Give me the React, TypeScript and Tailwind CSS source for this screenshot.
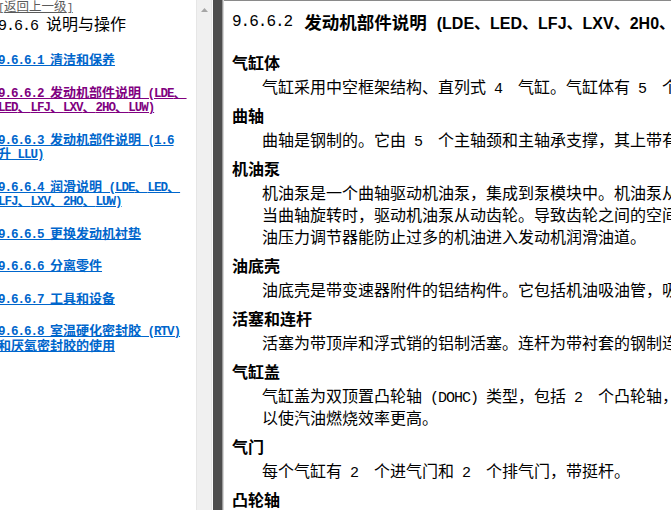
import React from 'react';

function Mixed({ text, ascii }: { text: string; ascii: string }) {
  const parts = text.split(/([\x20-\x7E]+)/);
  return (
    <>
      {parts.map((p, i) =>
        p === '' ? null : /^[\x20-\x7E]+$/.test(p) ? (
          <span key={i} className={ascii}>
            {p}
          </span>
        ) : (
          <span key={i}>{p}</span>
        )
      )}
    </>
  );
}

const LINK_ASCII = "font-['Liberation_Mono',monospace] text-[12.5px] tracking-[-1px]";
const BODY_ASCII = "font-['Liberation_Mono',monospace] text-[15px] tracking-[-1px]";

type LinkItem = { lines: string[]; visited?: boolean };

const links: LinkItem[] = [
  { lines: ['9.6.6.1 清洁和保养'] },
  { lines: ['9.6.6.2 发动机部件说明 (LDE、', 'LED、LFJ、LXV、2HO、LUW)'], visited: true },
  { lines: ['9.6.6.3 发动机部件说明 (1.6', '升 LLU)'] },
  { lines: ['9.6.6.4 润滑说明 (LDE、LED、', 'LFJ、LXV、2HO、LUW)'] },
  { lines: ['9.6.6.5 更换发动机衬垫'] },
  { lines: ['9.6.6.6 分离零件'] },
  { lines: ['9.6.6.7 工具和设备'] },
  { lines: ['9.6.6.8 室温硬化密封胶 (RTV)', '和厌氧密封胶的使用'] },
];

type Section = { title: string; body: string[] };

const sections: Section[] = [
  { title: '气缸体', body: ['气缸采用中空框架结构、直列式 4  气缸。气缸体有 5  个主轴承座'] },
  { title: '曲轴', body: ['曲轴是钢制的。它由 5  个主轴颈和主轴承支撑，其上带有'] },
  {
    title: '机油泵',
    body: [
      '机油泵是一个曲轴驱动机油泵，集成到泵模块中。机油泵从',
      '当曲轴旋转时，驱动机油泵从动齿轮。导致齿轮之间的空间',
      '油压力调节器能防止过多的机油进入发动机润滑油道。',
    ],
  },
  { title: '油底壳', body: ['油底壳是带变速器附件的铝结构件。它包括机油吸油管，吸'] },
  { title: '活塞和连杆', body: ['活塞为带顶岸和浮式销的铝制活塞。连杆为带衬套的钢制连杆'] },
  {
    title: '气缸盖',
    body: ['气缸盖为双顶置凸轮轴 (DOHC) 类型，包括 2  个凸轮轴，', '以使汽油燃烧效率更高。'],
  },
  { title: '气门', body: ['每个气缸有 2  个进气门和 2  个排气门，带挺杆。'] },
  { title: '凸轮轴', body: ['凸轮轴'] },
];

export default function App() {
  return (
    <div className="flex h-[510px] w-[671px] overflow-hidden bg-white font-['Noto_Sans_CJK_SC',sans-serif] text-black">
      {/* Left pane */}
      <div className="w-[196px] shrink-0 overflow-hidden bg-white">
        <div className="-ml-[2px] whitespace-pre">
          <div className="h-[12px] text-[12.5px] leading-[11px] text-[#5a5a5a]">
            <span className="underline underline-offset-[1px]">
              <Mixed text="[返回上一级]" ascii="font-['Liberation_Mono',monospace] text-[11px] tracking-[-0.5px]" />
            </span>
          </div>
          <div className="mt-[2px] h-[18px] text-[16px] leading-[18px] text-black">
            <Mixed text="9.6.6 说明与操作" ascii={BODY_ASCII} />
          </div>
          <div className="mt-[20px] flex flex-col gap-[18px] text-[13px] font-bold leading-[14.5px]">
            {links.map((l, i) => (
              <div key={i} className={l.visited ? 'text-[#800080]' : 'text-[#0066cc]'}>
                {l.lines.map((ln, j) => (
                  <div key={j} className="h-[14.5px]">
                    <span className="underline underline-offset-[1px]">
                      <Mixed text={ln} ascii={LINK_ASCII} />
                    </span>
                  </div>
                ))}
              </div>
            ))}
          </div>
        </div>
      </div>

      {/* Scrollbar */}
      <div className="flex w-[16px] shrink-0 flex-col items-center border-x border-[#e6e6e6] bg-[#f0f0f0]">
        <svg width="9" height="6" viewBox="0 0 9 6" className="mt-[7px]">
          <polygon points="4.5,1 8,5 1,5" fill="#a6a6a6" />
        </svg>
      </div>
      <div className="w-[1px] shrink-0 bg-[#fafafa]" />

      {/* Divider */}
      <div className="w-[9px] shrink-0 bg-[#4d4d4d]" />
      <div className="w-[1px] shrink-0 bg-[#9a9a9a]" />
      <div className="w-[1px] shrink-0 bg-[#d6d6d6]" />

      {/* Right pane */}
      <div className="min-w-0 flex-1 overflow-hidden border-t border-[#8a8a8a] bg-white pl-[8px] whitespace-pre">
        <div className="flex h-[48px] items-start pt-[9px] leading-[24px]">
          <span className="text-[16px] tracking-[-1px] font-['Liberation_Mono',monospace]">9.6.6.2</span>
          <span className="ml-[12px] text-[17.5px] font-bold">发动机部件说明</span>
          <span className="ml-[10px] text-[16px] font-bold">
            <Mixed
              text="(LDE、LED、LFJ、LXV、2H0、LUW)"
              ascii="font-['Liberation_Sans',Arial,sans-serif] text-[16px]"
            />
          </span>
        </div>
        {sections.map((s, i) => (
          <div key={i}>
            <div className="h-[26px] text-[16px] font-bold leading-[26px]">{s.title}</div>
            <div className="ml-[30px] pb-[5px] text-[16px] leading-[22px]">
              {s.body.map((b, j) => (
                <div key={j} className="h-[22px]">
                  <Mixed text={b} ascii={BODY_ASCII} />
                </div>
              ))}
            </div>
          </div>
        ))}
      </div>
    </div>
  );
}
